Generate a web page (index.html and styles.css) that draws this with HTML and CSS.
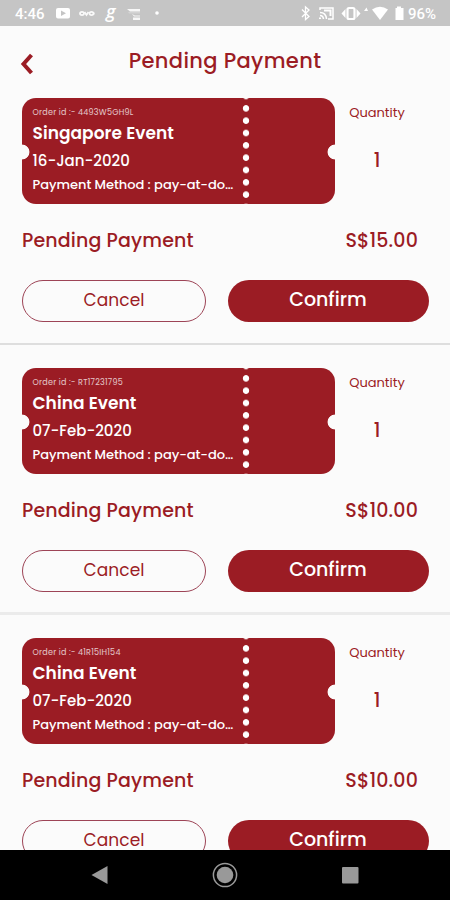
FILE: index.html
```html
<!DOCTYPE html>
<html lang="en">
<head>
    <meta charset="UTF-8">
    <meta name="viewport" content="width=device-width, initial-scale=1.0">
    <title>Pending Payment</title>
    <link rel="stylesheet" href="styles.css">
</head>
<body>

    <div class="screen">
        <div class="status-bar">
            <span class="clock">4:46</span>
            <svg width="46" height="26" viewBox="0 0 46 26" fill="#fff">
                <path fill-rule="evenodd" d="M3 8h10q2 0 2 2v6.500q0 2-2 2H3q-2 0-2-2V10q0-2 2-2zM6 10.500v5.500l5-2.700z"/>
                <g fill="none" stroke="#fff" stroke-width="1.800" opacity=".9">
                    <ellipse cx="27" cy="13.500" rx="2" ry="1.600"/>
                    <path d="M29.500 12l2 3 2-3"/>
                    <ellipse cx="36.500" cy="13.500" rx="2" ry="1.600"/>
                    <path d="M38 13.500h1.500"/>
                </g>
            </svg>
            <span class="g-icon">g</span>
            <svg width="44" height="26" viewBox="0 0 44 26" fill="#fff">
                <path d="M8 9h13v2.500H11zM13 14l3 1.500h5v1h-6zM14 17.500h7v2.500h-7z" opacity=".85"/>
                <path d="M9 12.500h12v.8H10z" opacity=".5"/>
                <circle cx="38" cy="13" r="1.800"/>
            </svg>
            <svg class="status-right" width="108" height="26" viewBox="0 0 108 26" fill="#fff">
                <path d="M2 9.500l7 7-3.500 3V7L9 10l-7 7" fill="none" stroke="#fff" stroke-width="1.300"/>
                <g fill="none" stroke="#fff" stroke-width="1.500">
                    <path d="M20 10V8h13v11h-5M20 12.500q6 0 6.500 6.500M20 15.500q3 0 3.500 3.500"/>
                    <path d="M24 10.500h6.500V16" stroke-width="2"/>
                    <rect x="47.500" y="8" width="7" height="11" rx="1.500" stroke-width="2.200"/>
                </g>
                <path d="M45.500 9v9l-4-4.500zM56.500 9v9l4-4.500z"/>
                <path d="M19 17.500h2V19h-2zM64 11L66.500 7.500L68 11z"/>
                <path d="M72 9.500q8-5.500 16 0L80 20z"/>
                <path d="M97 6.500h4V8h2.500v12h-8V8H97z"/>
            </svg>
            <span class="battery">96%</span>
        </div>

        <header class="header">
            <svg class="back" width="14" height="24" viewBox="0 0 14 24">
                <path d="M11.500 3L3.500 12L11.500 21" fill="none" stroke="#9b1c24" stroke-width="4"/>
            </svg>
            <h1>Pending Payment</h1>
        </header>

        <main class="orders">
            <section class="order">
                <div class="order-top">
                    <div class="ticket">
                        <div class="ticket-info">
                            <p class="order-id">Order id :- 4493W5GH9L</p>
                            <h2 class="event-name">Singapore Event</h2>
                            <p class="event-date">16-Jan-2020</p>
                            <p class="method">Payment Method : pay-at-do…</p>
                        </div>
                        <div class="perforation"></div>
                    </div>
                    <div class="quantity">
                        <span class="quantity-label">Quantity</span>
                        <span class="quantity-value">1</span>
                    </div>
                </div>
                <div class="total">
                    <span class="total-label">Pending Payment</span>
                    <span class="total-price">S$15.00</span>
                </div>
                <div class="actions">
                    <button class="btn cancel">Cancel</button>
                    <button class="btn confirm">Confirm</button>
                </div>
            </section>

            <section class="order">
                <div class="order-top">
                    <div class="ticket">
                        <div class="ticket-info">
                            <p class="order-id">Order id :- RT17231795</p>
                            <h2 class="event-name">China Event</h2>
                            <p class="event-date">07-Feb-2020</p>
                            <p class="method">Payment Method : pay-at-do…</p>
                        </div>
                        <div class="perforation"></div>
                    </div>
                    <div class="quantity">
                        <span class="quantity-label">Quantity</span>
                        <span class="quantity-value">1</span>
                    </div>
                </div>
                <div class="total">
                    <span class="total-label">Pending Payment</span>
                    <span class="total-price">S$10.00</span>
                </div>
                <div class="actions">
                    <button class="btn cancel">Cancel</button>
                    <button class="btn confirm">Confirm</button>
                </div>
            </section>

            <section class="order">
                <div class="order-top">
                    <div class="ticket">
                        <div class="ticket-info">
                            <p class="order-id">Order id :- 41R15IH154</p>
                            <h2 class="event-name">China Event</h2>
                            <p class="event-date">07-Feb-2020</p>
                            <p class="method">Payment Method : pay-at-do…</p>
                        </div>
                        <div class="perforation"></div>
                    </div>
                    <div class="quantity">
                        <span class="quantity-label">Quantity</span>
                        <span class="quantity-value">1</span>
                    </div>
                </div>
                <div class="total">
                    <span class="total-label">Pending Payment</span>
                    <span class="total-price">S$10.00</span>
                </div>
                <div class="actions">
                    <button class="btn cancel">Cancel</button>
                    <button class="btn confirm">Confirm</button>
                </div>
            </section>
        </main>

        <nav class="nav-bar">
            <svg width="26" height="26" viewBox="0 0 26 26"><path d="M4.500 13L20.500 4v18z" fill="#999"/></svg>
            <svg width="26" height="26" viewBox="0 0 26 26">
                <circle cx="13" cy="13" r="11.600" fill="none" stroke="#999" stroke-width="1.500"/>
                <circle cx="13" cy="13" r="8.300" fill="#999"/>
            </svg>
            <svg width="26" height="26" viewBox="0 0 26 26"><rect x="5" y="5" width="16.500" height="16.500" rx="1" fill="#999"/></svg>
        </nav>
    </div>

</body>
</html>
```

FILE: styles.css
```css
:root {
    --primary-color: #9b1c24;
    --background-color: #fbfbfb;
}

* {
    box-sizing: border-box;
    margin: 0;
    padding: 0;
}

body {
    font-family: 'Poppins', 'Inter', sans-serif;
    background-color: var(--background-color);
    color: var(--primary-color);
}

.screen {
    width: 450px;
    height: 900px;
    display: flex;
    flex-direction: column;
    overflow: hidden;
}

.status-bar {
    flex: none;
    height: 26px;
    background-color: #c5c5c5;
    color: #fff;
    display: flex;
    align-items: center;
    padding: 0 14px 0 15px;
    font-family: Roboto, sans-serif;
    font-size: 15px;
    line-height: 24px;
}

.clock {
    width: 40px;
    padding-top: 2px;
    font-weight: 500;
}

.g-icon {
    width: 18px;
    padding: 0 0 4px 5px;
    font-family: 'Open Sans', sans-serif;
    font-size: 18px;
    font-style: italic;
    font-weight: 600;
    line-height: 22px;
}

.status-right {
    margin-left: auto;
}

.battery {
    width: 28px;
    padding-top: 2px;
    font-weight: 500;
    white-space: nowrap;
}

.header {
    flex: none;
    height: 72px;
    display: flex;
    align-items: center;
    padding: 0 20px;
}

.back {
    margin-top: 3px;
}

.header h1 {
    flex: 1;
    font-size: 21px;
    font-weight: 500;
    line-height: 28px;
    padding: 0 14px 2px 0;
    text-align: center;
    letter-spacing: 0.35px;
}

.orders {
    flex: 1;
    min-height: 0;
    overflow: hidden;
}

.order {
    height: 270px;
    padding: 0 21px 0 22px;
    border-bottom: 2px solid #dedede;
}

.order:first-child {
    height: 247px;
    margin-bottom: 23px;
}

.order:nth-child(2) {
    height: 247px;
    margin-bottom: 23px;
    border-bottom: 3px solid #ebebeb;
}

.order-top {
    display: flex;
}

.ticket {
    width: 313px;
    height: 106px;
    display: flex;
    border-radius: 14px;
    color: #fff;
    background:
        radial-gradient(circle at 0 54px, var(--background-color) 7px, transparent 7.800px),
        radial-gradient(circle at 100% 54px, var(--background-color) 7px, transparent 7.800px),
        var(--primary-color);
}

.ticket-info {
    width: 220px;
    padding: 9px 0 0 10.500px;
    white-space: nowrap;
}

.order-id {
    font-size: 8px;
    line-height: 12px;
    letter-spacing: 0.25px;
    opacity: 0.75;
}

.event-name {
    font-size: 17px;
    font-weight: 600;
    line-height: 29px;
    letter-spacing: 0.05px;
}

.event-date {
    font-size: 15px;
    font-weight: 500;
    line-height: 25px;
}

.method {
    font-size: 13px;
    font-weight: 500;
    line-height: 24px;
    letter-spacing: -0.03px;
}

.perforation {
    width: 8px;
    background: radial-gradient(circle, #fff 2.800px, transparent 3.600px) 0 4.200px / 8px 12.330px;
}

.quantity {
    flex: 1;
    display: flex;
    flex-direction: column;
    align-items: center;
    padding-top: 5px;
    margin-right: 10px;
}

.quantity-label {
    font-size: 13px;
    line-height: 20px;
}

.quantity-value {
    font-size: 19px;
    font-weight: 500;
    line-height: 28px;
    margin-top: 24px;
}

.total {
    display: flex;
    justify-content: space-between;
    padding: 23px 11px 0 0;
    font-size: 19px;
    font-weight: 500;
    line-height: 28px;
    letter-spacing: 0.15px;
}

.actions {
    display: flex;
    justify-content: space-between;
    margin-top: 25px;
}

.btn {
    height: 42px;
    border-radius: 21px;
    font-family: inherit;
    line-height: 20px;
    padding-bottom: 3px;
}

.cancel {
    width: 184px;
    border: 1px solid #9d4456;
    background: none;
    color: var(--primary-color);
    font-size: 17px;
    letter-spacing: 0.1px;
}

.confirm {
    width: 201px;
    border: none;
    background-color: var(--primary-color);
    color: #fff;
    font-size: 19px;
    font-weight: 500;
    padding-right: 1px;
}

.nav-bar {
    flex: none;
    height: 50px;
    background-color: #000;
    display: flex;
    align-items: center;
    justify-content: space-between;
    padding: 0 87px;
}
```
